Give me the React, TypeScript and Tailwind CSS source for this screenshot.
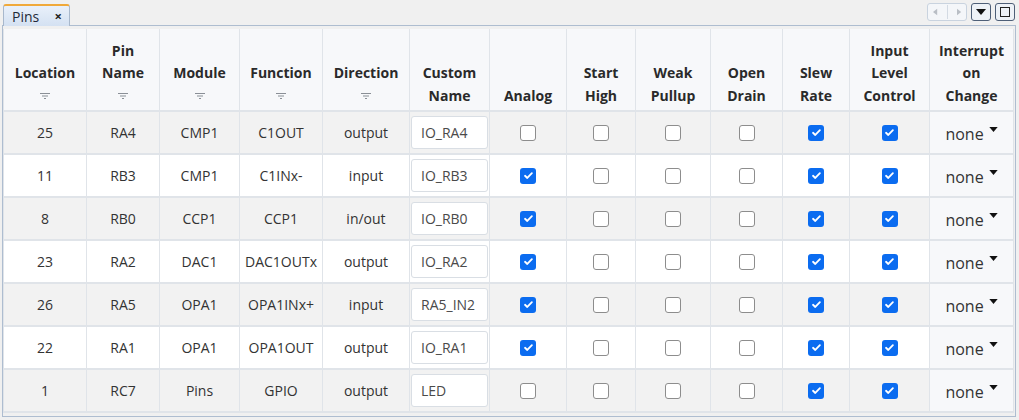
import React from "react";

type Row = {
  loc: string;
  pin: string;
  mod: string;
  fn: string;
  dir: string;
  name: string;
  analog: boolean;
  high: boolean;
  pullup: boolean;
  drain: boolean;
  slew: boolean;
  ilc: boolean;
};

const rows: Row[] = [
  { loc: "25", pin: "RA4", mod: "CMP1", fn: "C1OUT", dir: "output", name: "IO_RA4", analog: false, high: false, pullup: false, drain: false, slew: true, ilc: true },
  { loc: "11", pin: "RB3", mod: "CMP1", fn: "C1INx-", dir: "input", name: "IO_RB3", analog: true, high: false, pullup: false, drain: false, slew: true, ilc: true },
  { loc: "8", pin: "RB0", mod: "CCP1", fn: "CCP1", dir: "in/out", name: "IO_RB0", analog: true, high: false, pullup: false, drain: false, slew: true, ilc: true },
  { loc: "23", pin: "RA2", mod: "DAC1", fn: "DAC1OUTx", dir: "output", name: "IO_RA2", analog: true, high: false, pullup: false, drain: false, slew: true, ilc: true },
  { loc: "26", pin: "RA5", mod: "OPA1", fn: "OPA1INx+", dir: "input", name: "RA5_IN2", analog: true, high: false, pullup: false, drain: false, slew: true, ilc: true },
  { loc: "22", pin: "RA1", mod: "OPA1", fn: "OPA1OUT", dir: "output", name: "IO_RA1", analog: true, high: false, pullup: false, drain: false, slew: true, ilc: true },
  { loc: "1", pin: "RC7", mod: "Pins", fn: "GPIO", dir: "output", name: "LED", analog: false, high: false, pullup: false, drain: false, slew: true, ilc: true },
];

// header columns: label lines, sortable, width
const cols: { lines: string[]; sort?: boolean; w: string }[] = [
  { lines: ["Location"], sort: true, w: "w-[83px]" },
  { lines: ["Pin", "Name"], sort: true, w: "w-[73px]" },
  { lines: ["Module"], sort: true, w: "w-[80px]" },
  { lines: ["Function"], sort: true, w: "w-[83px]" },
  { lines: ["Direction"], sort: true, w: "w-[87px]" },
  { lines: ["Custom", "Name"], w: "w-[80px]" },
  { lines: ["Analog"], w: "w-[77px]" },
  { lines: ["Start", "High"], w: "w-[69px]" },
  { lines: ["Weak", "Pullup"], w: "w-[75px]" },
  { lines: ["Open", "Drain"], w: "w-[72px]" },
  { lines: ["Slew", "Rate"], w: "w-[67px]" },
  { lines: ["Input", "Level", "Control"], w: "w-[80px]" },
  { lines: ["Interrupt", "on", "Change"], w: "w-[84px]" },
];

function SortIcon() {
  return (
    <div className="flex h-[22.5px] items-center justify-center">
      <svg viewBox="0 0 10 8" width="10" height="8" aria-hidden>
        <path d="M0 1.5h10M2 4h6M4 6.5h2" stroke="#8a8f96" strokeWidth="1.2" />
      </svg>
    </div>
  );
}

function Check({ on }: { on: boolean }) {
  if (on) {
    return (
      <span className="mx-auto grid size-[16px] place-items-center rounded-[3px] bg-[#0b6cf0]">
        <svg viewBox="0 0 12 12" width="11" height="11" fill="none" aria-hidden>
          <path d="M2.2 6.3l2.5 2.4 5-5.2" stroke="white" strokeWidth="2" strokeLinecap="round" strokeLinejoin="round" />
        </svg>
      </span>
    );
  }
  return <span className="mx-auto block size-[16px] rounded-[3px] border-[1.5px] border-[#8d8d8d] bg-white" />;
}

function Controls() {
  return (
    <div className="flex items-center gap-[4px] pb-[4px]">
      <div className="flex h-[18px] w-[40px] items-center justify-around rounded-[3px] border border-[#c9d3df] bg-[#f4f6f9]">
        <svg viewBox="0 0 6 8" width="5" height="8" aria-hidden>
          <path d="M5 0L0 4l5 4z" fill="#b9bec5" />
        </svg>
        <span className="h-[14px] w-px bg-[#d3dae3]" />
        <svg viewBox="0 0 6 8" width="5" height="8" aria-hidden>
          <path d="M0 0l5 4-5 4z" fill="#b9bec5" />
        </svg>
      </div>
      <div className="grid h-[18px] w-[20px] place-items-center rounded-[3px] border border-[#4e5f77] bg-[#eef2f7]">
        <svg viewBox="0 0 10 6" width="10" height="6" aria-hidden>
          <path d="M0 0h10L5 6z" fill="#111" />
        </svg>
      </div>
      <div className="grid h-[18px] w-[20px] place-items-center rounded-[3px] border border-[#4e5f77] bg-[#eef2f7]">
        <span className="block size-[10px] border-[1.5px] border-[#222]" />
      </div>
    </div>
  );
}

export default function App() {
  return (
    <div className="h-[420px] w-[1019px] bg-[#f0f0f0] font-['Segoe_UI','Open_Sans',sans-serif] text-[#333]">
      {/* tab strip */}
      <div className="flex h-[25px] items-end justify-between pl-[3px] pr-[4px]">
        <div className="relative top-px flex h-[22px] w-[67px] items-center justify-between rounded-t-[3px] border border-b-0 border-t-2 border-[#a8b8cc] border-t-[#f0a93a] bg-gradient-to-b from-[#e9f0fa] to-[#d4e1f2] pl-[8px] pr-[7px]">
          <span className="text-[14px] text-[#1f2a38]">Pins</span>
          <span className="text-[13px] font-bold leading-none text-[#222]">×</span>
        </div>
        <Controls />
      </div>

      {/* panel */}
      <div className="ml-[2px] w-[1014px] border border-[#aebdd0] bg-[#f0f0f0] pt-[3px] pb-[3px]">
        <table className="w-[1011px] table-fixed border-collapse text-center">
          <colgroup>
            {cols.map((c) => (
              <col key={c.lines.join(" ")} className={c.w} />
            ))}
          </colgroup>
          <thead>
            <tr className="h-[82px] bg-[#f7f8fa]">
              {cols.map((c) => (
                <th
                  key={c.lines.join(" ")}
                  className="border-x border-b-2 border-[#e0e4e9] px-0 pb-[3px] align-bottom text-[14px] font-bold leading-[22.5px] text-[#2a2a2a]"
                >
                  {c.lines.map((l) => (
                    <div key={l}>{l}</div>
                  ))}
                  {c.sort && <SortIcon />}
                </th>
              ))}
            </tr>
          </thead>
          <tbody className="text-[14px]">
            {rows.map((r, i) => {
              const bg = i % 2 === 0 ? "bg-[#f2f2f2]" : "bg-white";
              return (
                <tr key={r.loc} className={`h-[43px] ${bg}`}>
                  <td className="border-x border-b-2 border-[#e0e4e9]">{r.loc}</td>
                  <td className="border-x border-b-2 border-[#e0e4e9]">{r.pin}</td>
                  <td className="border-x border-b-2 border-[#e0e4e9]">{r.mod}</td>
                  <td className="border-x border-b-2 border-[#e0e4e9]">{r.fn}</td>
                  <td className="border-x border-b-2 border-[#e0e4e9]">{r.dir}</td>
                  <td className="border-x border-b-2 border-[#e0e4e9] px-[1px]">
                    <div className="mx-auto flex h-[33px] w-[77px] items-center rounded-[3px] border border-[#d9dee4] bg-white pl-[9px] text-left text-[#4a4a4a]">
                      {r.name}
                    </div>
                  </td>
                  <td className="border-x border-b-2 border-[#e0e4e9]"><Check on={r.analog} /></td>
                  <td className="border-x border-b-2 border-[#e0e4e9]"><Check on={r.high} /></td>
                  <td className="border-x border-b-2 border-[#e0e4e9]"><Check on={r.pullup} /></td>
                  <td className="border-x border-b-2 border-[#e0e4e9]"><Check on={r.drain} /></td>
                  <td className="border-x border-b-2 border-[#e0e4e9]"><Check on={r.slew} /></td>
                  <td className="border-x border-b-2 border-[#e0e4e9]"><Check on={r.ilc} /></td>
                  <td className="border-x border-b-2 border-[#e0e4e9] bg-[#f7f8fa]">
                    <span className="inline-flex items-start pt-[3px] text-[16px] text-[#333]">
                      none
                      <svg viewBox="0 0 10 6" width="9" height="5" className="ml-[5px] mt-[5px]" aria-hidden>
                        <path d="M0 0h10L5 6z" fill="#111" />
                      </svg>
                    </span>
                  </td>
                </tr>
              );
            })}
          </tbody>
        </table>
      </div>
    </div>
  );
}
